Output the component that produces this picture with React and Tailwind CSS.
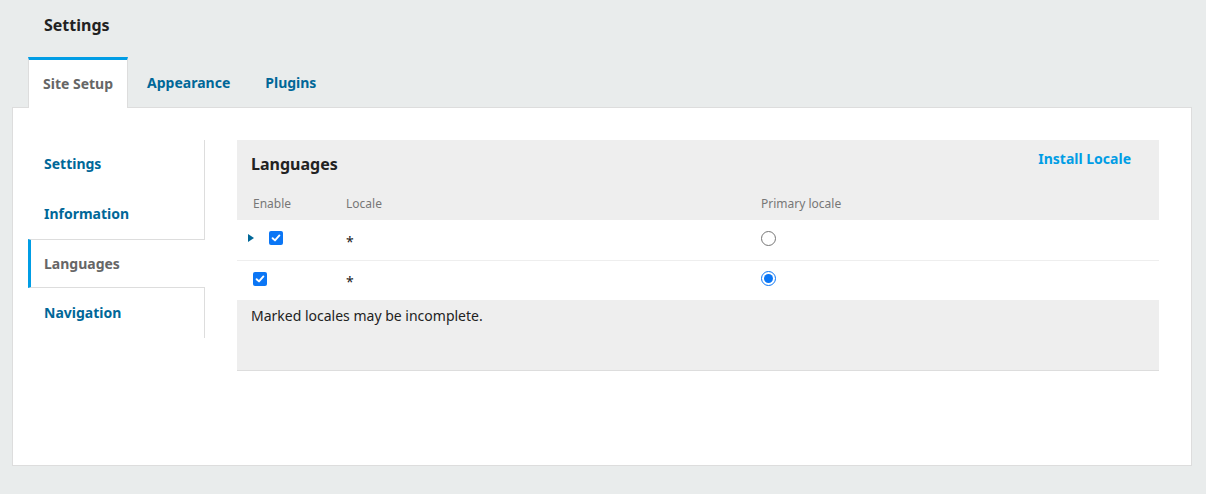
import React from "react";

const font = { fontFamily: '"Noto Sans", "Open Sans", sans-serif' };

function Check() {
  return (
    <span className="inline-flex w-[14px] h-[14px] rounded-[2px] bg-[#0b76f5] items-center justify-center">
      <svg width="10" height="10" viewBox="0 0 10 10">
        <path d="M1.6 5.2 L4 7.4 L8.4 2.4" stroke="#fff" strokeWidth="1.9" fill="none" strokeLinecap="round" strokeLinejoin="round" />
      </svg>
    </span>
  );
}

function Radio({ checked }) {
  return checked ? (
    <span className="inline-flex w-[15px] h-[15px] rounded-full border-[1.5px] border-[#0b76f5] items-center justify-center bg-white">
      <span className="w-[9px] h-[9px] rounded-full bg-[#0b76f5]" />
    </span>
  ) : (
    <span className="inline-block w-[15px] h-[15px] rounded-full border border-[#767676] bg-white" />
  );
}

export default function App() {
  return (
    <div style={font} className="w-full h-[494px] bg-[#e9ecec] text-[#222] overflow-hidden">
      <div className="h-[57px] pl-[44px] pt-[13px] text-[16px] font-bold text-[#222] leading-[24px]">Settings</div>
      <div className="flex items-end pl-[28px] h-[51px] relative z-10 -mb-px">
        <div className="h-[51px] px-[14px] bg-white border-x border-[#dddddd] border-t-[3px] border-t-[#009de5] flex items-center text-[14px] font-bold text-[#666]">
          <span className="-mt-[2px]">Site Setup</span>
        </div>
        <div className="h-[51px] ml-[19px] flex items-center text-[14px] font-bold text-[#006798]">
          <span>Appearance</span>
        </div>
        <div className="h-[51px] ml-[35px] flex items-center text-[14px] font-bold text-[#006798]">
          <span>Plugins</span>
        </div>
      </div>
      <div className="ml-[12px] mr-[14px] h-[359px] bg-white border border-[#dddddd] pt-[32px] pl-[15px] pr-[32px] flex">
        <div className="w-[177px] shrink-0 flex flex-col text-[14px] font-bold">
          <div className="h-[49px] border-r border-[#dddddd] pl-[16px] pb-[2px] flex items-center text-[#006798]">Settings</div>
          <div className="h-[50px] border-r border-[#dddddd] pl-[16px] pb-[2px] flex items-center text-[#006798]">Information</div>
          <div className="h-[49px] border-y border-[#dddddd] border-l-[3px] border-l-[#009de5] pl-[13px] pb-[1px] flex items-center text-[#666]">Languages</div>
          <div className="h-[50px] border-r border-[#dddddd] pl-[16px] pb-[2px] flex items-center text-[#006798]">Navigation</div>
        </div>
        <div className="ml-[32px] flex-1 flex flex-col h-[231px] self-start">
          <div className="bg-[#eeeeee] h-[80px] flex flex-col">
            <div className="flex items-start justify-between pl-[14px] pr-[28px] pt-[12px]">
              <div className="text-[16px] font-bold text-[#222] leading-[24px]">Languages</div>
              <div className="text-[14px] font-bold text-[#009de5] leading-[20px] -mt-[3px]">Install Locale</div>
            </div>
            <div className="flex mt-auto pb-[8px] text-[12px] text-[#777] leading-[16px]">
              <div className="w-[93px] pl-[16px]">Enable</div>
              <div className="w-[415px] pl-[16px]">Locale</div>
              <div className="pl-[16px]">Primary locale</div>
            </div>
          </div>
          <div className="flex items-center h-[41px] border-b border-[#eeeeee] bg-white">
            <div className="w-[93px] pl-[11px] pb-[4px] flex items-center">
              <svg width="6" height="8" viewBox="0 0 6 8" className="mr-[15px]">
                <path d="M0 0 L6 4 L0 8 Z" fill="#006798" />
              </svg>
              <Check />
            </div>
            <div className="w-[415px] pl-[16px] text-[14px] text-[#222] pt-[2px]">*</div>
            <div className="pl-[16px] pb-[4px] flex items-center"><Radio /></div>
          </div>
          <div className="flex items-center h-[39px] bg-white">
            <div className="w-[93px] pl-[16px] pb-[4px] flex items-center">
              <Check />
            </div>
            <div className="w-[415px] pl-[16px] text-[14px] text-[#222] pt-[2px]">*</div>
            <div className="pl-[16px] pb-[4px] flex items-center"><Radio checked /></div>
          </div>
          <div className="bg-[#eeeeee] flex-1 border-b border-[#dddddd] pl-[14px] pt-[6px] text-[14px] leading-[20px] text-[#222]">
            Marked locales may be incomplete.
          </div>
        </div>
      </div>
    </div>
  );
}
